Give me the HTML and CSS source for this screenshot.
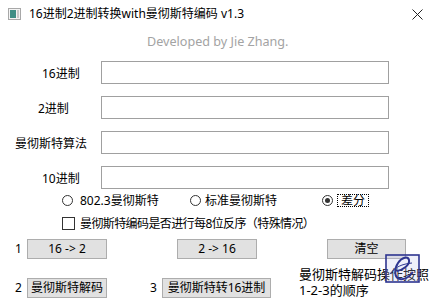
FILE: index.html
```html
<html>
    <link rel="stylesheet" href="styles.css">
<head>
    <meta charset="UTF-8">
    <meta name="viewport" content="width=device-width, initial-scale=1.0">
</head>
<body>
    <div class="window">
        <div class="titlebar">
            <svg class="app-icon" width="13" height="12" viewBox="0 0 13 12">
                <rect x="0.5" y="0.5" width="12" height="11" fill="#f4f4f4" stroke="#a8a8a8"/>
                <rect x="2" y="2" width="6" height="8" fill="#3f8f86"/>
                <rect x="9" y="2" width="2" height="8" fill="#c8c8c8"/>
            </svg>
            <div class="title">16进制2进制转换with曼彻斯特编码 v1.3</div>
            <svg class="close" width="11" height="11" viewBox="0 0 11 11">
                <path d="M0.5 0.5 L10.5 10.5 M10.5 0.5 L0.5 10.5" stroke="#222" stroke-width="1"/>
            </svg>
        </div>

        <div class="dev">Developed by Jie Zhang.</div>

        <div class="fields">
            <div class="field">
                <label class="lbl lbl-16">16进制</label>
                <input class="box" type="text">
            </div>
            <div class="field">
                <label class="lbl lbl-2">2进制</label>
                <input class="box" type="text">
            </div>
            <div class="field">
                <label class="lbl lbl-alg">曼彻斯特算法</label>
                <input class="box" type="text">
            </div>
            <div class="field">
                <label class="lbl lbl-16">10进制</label>
                <input class="box" type="text">
            </div>
        </div>

        <div class="radio-row">
            <div class="opt opt-1"><span class="radio"></span><span>802.3曼彻斯特</span></div>
            <div class="opt opt-2"><span class="radio"></span><span>标准曼彻斯特</span></div>
            <div class="opt opt-3"><span class="radio checked"></span><span class="focus">差分</span></div>
        </div>

        <div class="check-row">
            <span class="checkbox"></span>
            <span class="check-text">曼彻斯特编码是否进行每8位反序（特殊情况）</span>
        </div>

        <div class="btn-row">
            <span class="step">1</span>
            <button class="btn">16 -&gt; 2</button>
            <button class="btn btn-mid">2 -&gt; 16</button>
            <button class="btn btn-clear">清空</button>
        </div>

        <div class="btn-row row-2">
            <span class="step">2</span>
            <button class="btn">曼彻斯特解码</button>
            <span class="step step-3">3</span>
            <button class="btn btn-wide">曼彻斯特转16进制</button>
            <div class="hint">曼彻斯特解码操作按照<br>1-2-3的顺序</div>
        </div>

        <svg class="stamp" width="36" height="30" viewBox="0 0 36 30">
            <rect x="1" y="1" width="33" height="27" fill="rgba(190,195,235,0.25)" stroke="#2e3590" stroke-width="1.6"/>
            <path d="M12 17 C18 16 25 11 24 6 C23 2 17 3 13 9 C9 15 9 24 15 25 C20 26 25 22 28 18" fill="none" stroke="#2e3590" stroke-width="2"/>
            <path d="M5 20 C10 13 17 10 27 9" fill="none" stroke="#2e3590" stroke-width="1"/>
        </svg>
    </div>
</body>
</html>
```

FILE: styles.css
```css
body {
    margin: 0;
    background-color: #fff;
    font-family: "Noto Sans", "Noto Sans CJK SC", sans-serif;
    font-size: 12px;
    color: #000;
}

.window {
    position: relative;
    width: 432px;
    height: 301px;
    overflow: hidden;
    background-color: #fff;
}

.titlebar {
    display: flex;
    align-items: center;
    height: 28px;
    padding-left: 8px;
}

.app-icon {
    flex: none;
}

.title {
    margin-left: 8px;
    flex: 1;
    line-height: 16px;
    white-space: nowrap;
}

.close {
    flex: none;
    margin-right: 9px;
}

.dev {
    margin-top: 6px;
    padding-left: 147px;
    line-height: 16px;
    font-size: 12.6px;
    color: #a3a3a3;
}

.fields {
    display: flex;
    flex-direction: column;
    gap: 12px;
    margin-top: 11px;
}

.field {
    display: flex;
    align-items: center;
    height: 23px;
}

.lbl {
    width: 101px;
    box-sizing: border-box;
    white-space: nowrap;
}

.lbl-16 {
    padding-left: 42px;
}

.lbl-2 {
    padding-left: 38px;
}

.lbl-alg {
    padding-left: 15px;
}

.box {
    width: 288px;
    height: 23px;
    box-sizing: border-box;
    border: 1px solid #a0a0a0;
    padding: 0 3px;
    font: inherit;
    outline: none;
}

.radio-row {
    display: flex;
    align-items: center;
    height: 16px;
    margin-top: 3px;
    padding-left: 62px;
}

.opt {
    display: flex;
    align-items: center;
    white-space: nowrap;
}

.opt-1 {
    width: 128px;
}

.opt-2 {
    width: 132px;
}

.radio {
    width: 11px;
    height: 11px;
    margin-right: 7px;
    border: 1px solid #333;
    border-radius: 50%;
    position: relative;
    box-sizing: border-box;
}

.opt-2 .radio {
    margin-right: 4px;
}

.opt-3 .radio {
    margin-right: 4px;
}

.radio.checked::after {
    content: "";
    position: absolute;
    left: 2px;
    top: 2px;
    width: 5px;
    height: 5px;
    border-radius: 50%;
    background-color: #333;
}

.focus {
    border: 1px dotted #000;
    padding: 0 3px;
    line-height: 11px;
    height: 11px;
}

.check-row {
    display: flex;
    align-items: center;
    height: 16px;
    margin-top: 7px;
    padding-left: 62px;
}

.checkbox {
    width: 13px;
    height: 13px;
    margin-right: 5px;
    border: 1px solid #333;
    box-sizing: border-box;
}

.check-text {
    letter-spacing: -0.6px;
}

.btn-row {
    display: flex;
    align-items: center;
    margin-top: 8px;
    padding-left: 15px;
}

.step {
    width: 12px;
    line-height: 16px;
    color: #000;
}

.btn {
    width: 80px;
    height: 20px;
    padding: 0;
    border: 1px solid #adadad;
    background-color: #e1e1e1;
    font: inherit;
    line-height: 16px;
    color: #000;
}

.btn-mid {
    margin-left: 70px;
}

.btn-clear {
    margin-left: 70px;
    width: 79px;
}

.row-2 {
    margin-top: 7px;
    align-items: flex-end;
}

.row-2 .step {
    margin-bottom: 2px;
}

.step-3 {
    margin-left: 43px;
}

.btn-wide {
    width: 109px;
}

.hint {
    margin-left: 28px;
    font-size: 13px;
    line-height: 16px;
    white-space: nowrap;
}

.stamp {
    position: absolute;
    left: 385px;
    top: 254px;
}
```
